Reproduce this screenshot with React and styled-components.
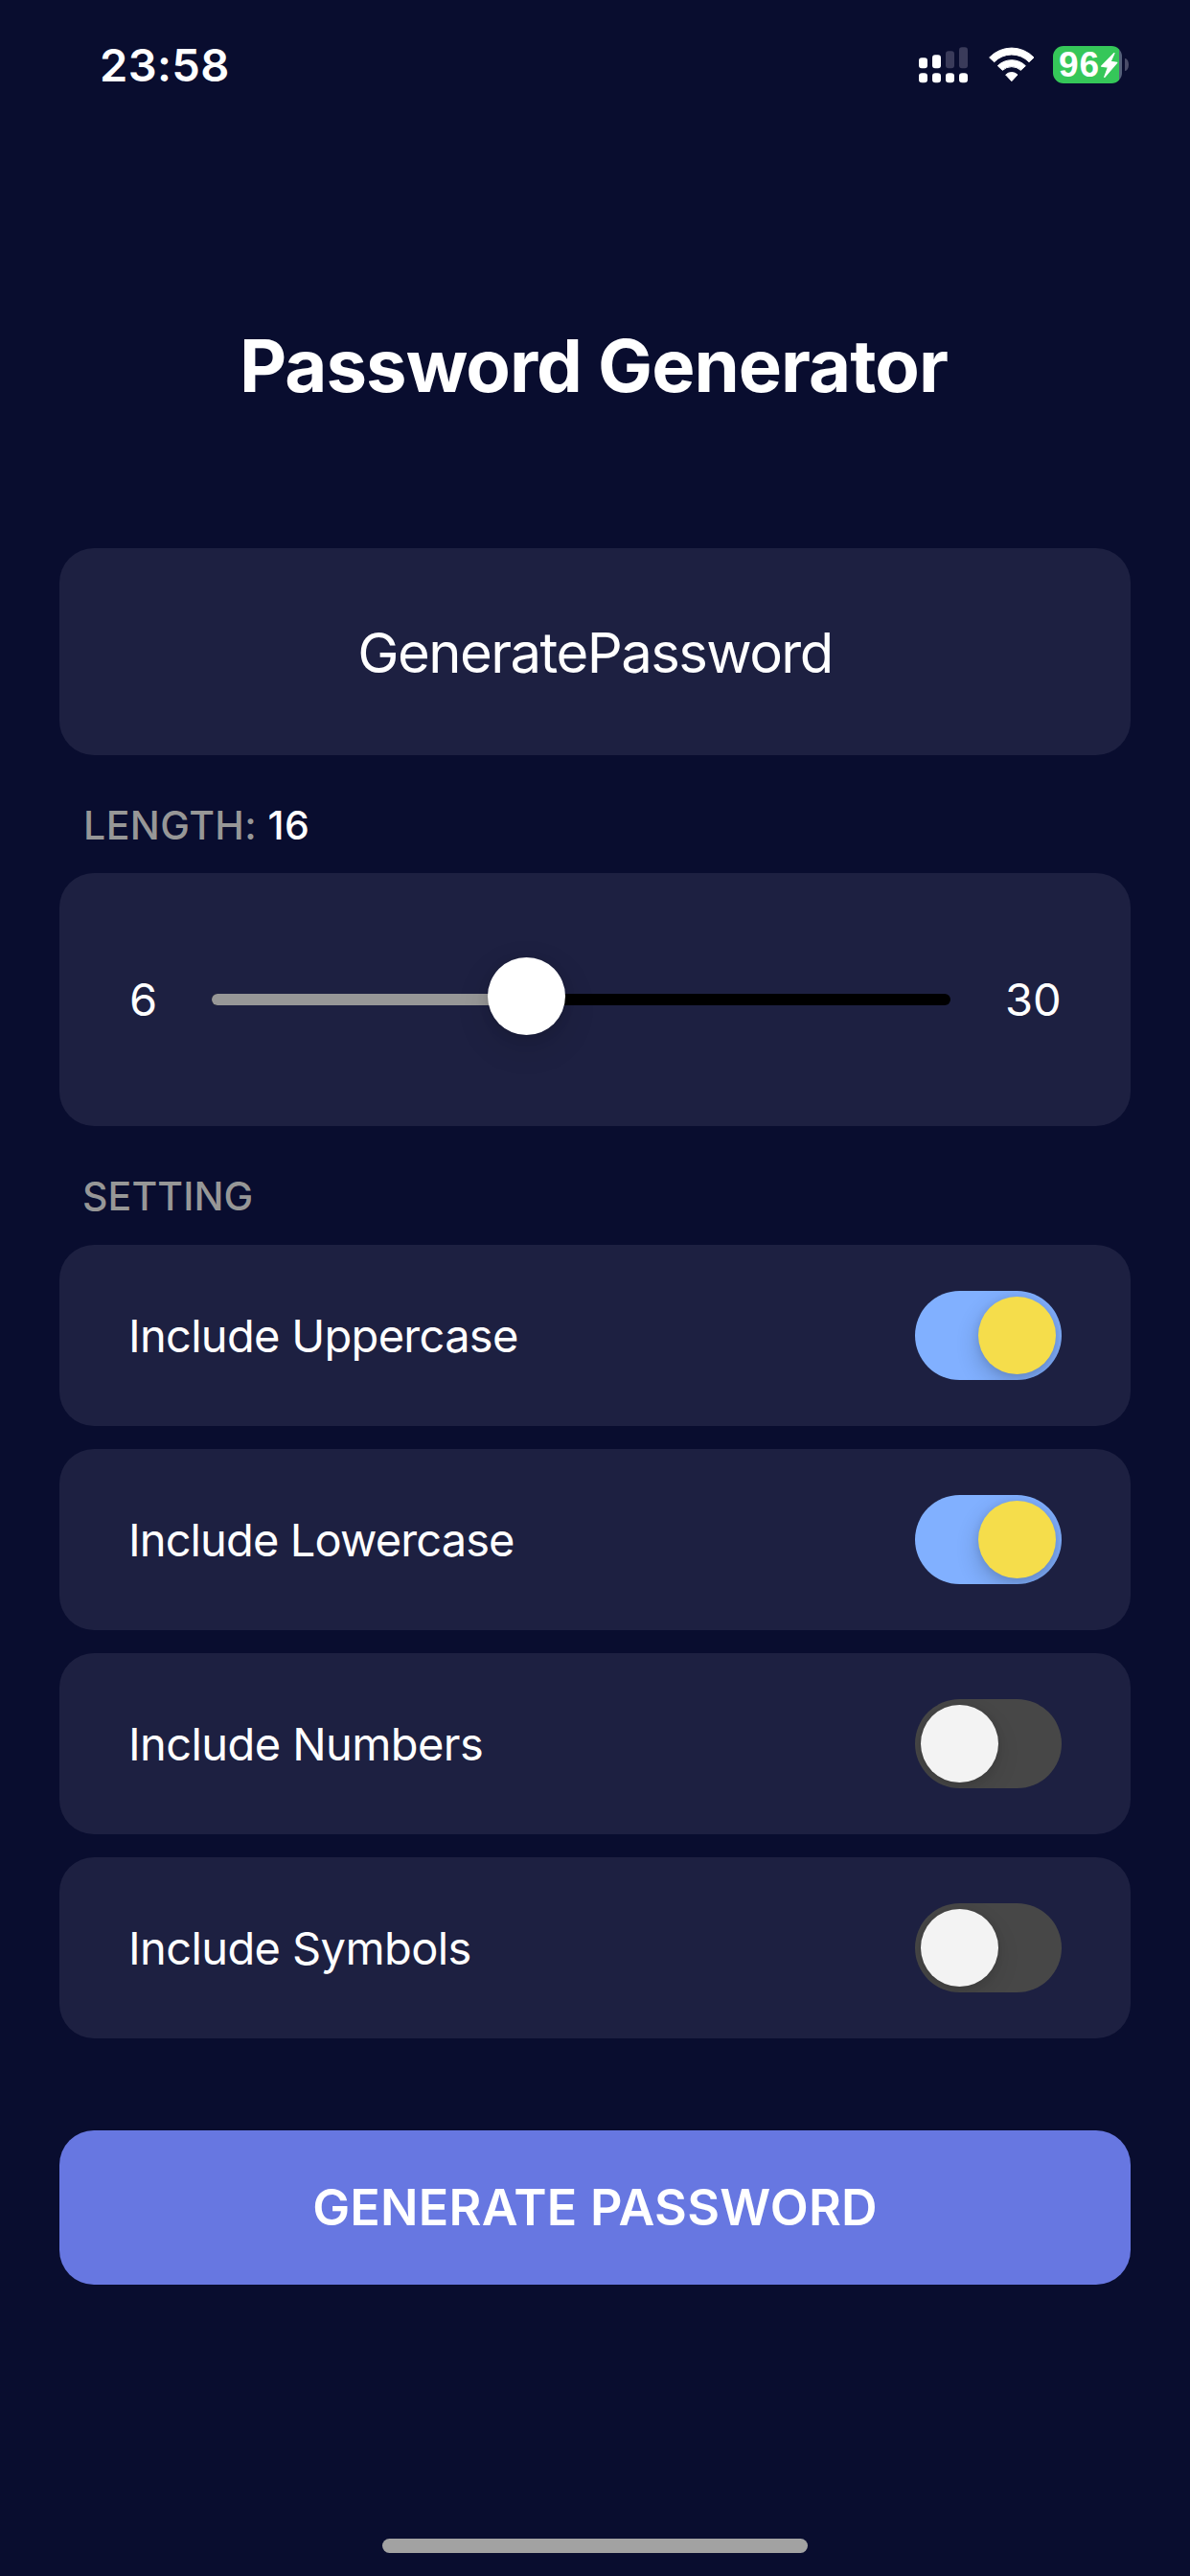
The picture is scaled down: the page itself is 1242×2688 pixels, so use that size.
import React, { useState } from "react";
import styled, { createGlobalStyle } from "styled-components";

const GlobalStyle = createGlobalStyle`
  * { box-sizing: border-box; }
  html, body { margin: 0; background: #090d2f; }
  body { font-family: Inter, "Liberation Sans", sans-serif; color: #fff; }
`;

const Screen = styled.div`
  display: flex;
  flex-direction: column;
  width: 1242px;
  height: 2688px;
  background: #090d2f;
  overflow: hidden;
`;

const StatusBar = styled.header`
  display: flex;
  justify-content: space-between;
  align-items: flex-start;
  height: 136px;
  padding: 0 64px 0 104px;
`;

const Time = styled.span`
  font-size: 47px;
  font-weight: 600;
  line-height: 136px;
  letter-spacing: 0.4px;
`;

const StatusIcons = styled.div`
  display: flex;
  align-items: flex-start;
  padding-top: 47px;
`;

const SignalIcon = styled.svg`
  width: 51px;
  height: 40px;
  margin-right: 20px;
`;

const WifiIcon = styled.svg`
  width: 52px;
  height: 40px;
  margin-right: 17px;
`;

const Battery = styled.div`
  display: flex;
  align-items: center;
  margin-top: 1px;
  height: 39px;
`;

const BatteryBody = styled.div`
  display: flex;
  align-items: center;
  width: 72px;
  height: 39px;
  padding-left: 6px;
  border-radius: 11px;
  background: linear-gradient(90deg, #35c759 69px, #55607a 69px);
`;

const BatteryLevel = styled.span`
  font-family: "Liberation Sans", Arial, sans-serif;
  font-size: 37px;
  font-weight: 700;
  line-height: 39px;
  letter-spacing: 0.8px;
`;

const Bolt = styled.svg`
  width: 19px;
  height: 28px;
  flex-shrink: 0;
`;

const BatteryTip = styled.div`
  width: 4px;
  height: 13px;
  margin-left: 3px;
  border-radius: 0 4px 4px 0 / 0 7px 7px 0;
  background: #4a4c68;
`;

const Content = styled.main`
  display: flex;
  flex-direction: column;
  padding: 0 62px;
`;

const Title = styled.h1`
  margin: 197px 0 142px;
  padding-right: 3px;
  font-size: 76px;
  font-weight: 700;
  line-height: 97px;
  letter-spacing: -0.96px;
  text-align: center;
`;

const Card = styled.section`
  background: #1d2041;
  border-radius: 36px;
`;

const PasswordCard = styled(Card)`
  display: flex;
  align-items: center;
  justify-content: center;
  height: 216px;
  padding-top: 1px;
  font-size: 58px;
  letter-spacing: -1.56px;
`;

const Label = styled.h2`
  margin: 48px 0 0;
  padding-left: ${(p) => p.$indent}px;
  height: ${(p) => p.$height}px;
  font-size: 41px;
  font-weight: 500;
  line-height: 51px;
  letter-spacing: ${(p) => p.$tracking}px;
  color: #979797;
`;

const LabelValue = styled.span`
  color: #fff;
`;

const SliderCard = styled(Card)`
  display: grid;
  grid-template-columns: 86px 771px auto;
  align-items: center;
  height: 264px;
  padding-left: 73px;
`;

const Bound = styled.span`
  padding-left: ${(p) => p.$gap}px;
  font-size: 47px;
  line-height: 60px;
`;

const Track = styled.div`
  position: relative;
  height: 12px;
  border-radius: 6px;
  background: #000;
`;

const TrackFill = styled.div`
  height: 12px;
  border-radius: 6px 0 0 6px;
  background: #979797;
`;

const Thumb = styled.div`
  position: absolute;
  top: -38px;
  width: 81px;
  height: 81px;
  border-radius: 50%;
  background: #fff;
  box-shadow: 0 12px 36px rgba(0, 0, 0, 0.12), 0 2px 12px rgba(0, 0, 0, 0.1);
`;

const SettingList = styled.div`
  display: flex;
  flex-direction: column;
  gap: 24px;
`;

const SettingRow = styled(Card)`
  display: flex;
  align-items: center;
  justify-content: space-between;
  height: 189px;
  padding: 0 72px;
`;

const SettingName = styled.span`
  padding-top: 1px;
  font-size: 47px;
  line-height: 60px;
  letter-spacing: ${(p) => p.$tracking}px;
`;

const Switch = styled.button`
  display: flex;
  justify-content: ${(p) => (p.$on ? "flex-end" : "flex-start")};
  width: 153px;
  height: 93px;
  padding: 6px;
  border: 0;
  border-radius: 47px;
  background: ${(p) => (p.$on ? "#81b0ff" : "#474747")};
  overflow: hidden;
`;

const Knob = styled.span`
  width: 81px;
  height: 81px;
  border-radius: 50%;
  background: ${(p) => (p.$on ? "#f5dd4b" : "#f3f3f3")};
  box-shadow: 0 9px 24px rgba(0, 0, 0, ${(p) => (p.$on ? 0.2 : 0.1)}),
    0 1px 8px rgba(0, 0, 0, 0.1);
`;

const GenerateButton = styled.button`
  height: 161px;
  margin-top: 96px;
  padding: 0;
  border: 0;
  border-radius: 36px;
  background: #6777e1;
  color: #fff;
  font-family: inherit;
  font-size: 52px;
  font-weight: 600;
  line-height: 162px;
  letter-spacing: 0.25px;
`;

const HomeIndicator = styled.div`
  align-self: center;
  width: 444px;
  height: 15px;
  margin: auto 0 24px;
  border-radius: 8px;
  background: #a2a2a2;
`;

const MIN = 6;
const MAX = 30;
const TRACK_WIDTH = 771;
const THUMB_WIDTH = 81;

const SETTINGS = [
  { name: "Include Uppercase", on: true, tracking: -0.7 },
  { name: "Include Lowercase", on: true, tracking: -0.88 },
  { name: "Include Numbers", on: false, tracking: -0.58 },
  { name: "Include Symbols", on: false, tracking: -0.6 },
];

function Signal() {
  return (
    <SignalIcon viewBox="87 50 153 120" fill="#fff">
      <rect x="87" y="90" width="27" height="33" rx="9" />
      <rect x="129" y="81" width="27" height="42" rx="9" />
      <rect x="171" y="69" width="27" height="54" rx="9" fill="#3a3b5a" />
      <rect x="213" y="57" width="27" height="66" rx="9" fill="#3a3b5a" />
      {[87, 129, 171, 213].map((x) => (
        <rect key={x} x={x} y="138" width="27" height="30" rx="10" />
      ))}
    </SignalIcon>
  );
}

function Wifi() {
  return (
    <WifiIcon viewBox="299 50 156 120" fill="#fff" stroke="#fff" strokeWidth="3" strokeLinejoin="round">
      <path d="M307 89 A96 96 0 0 1 446 89 L431 103 A76 76 0 0 0 322 103 Z" />
      <path d="M333 115 A62 62 0 0 1 420 115 L405 129 A42 42 0 0 0 348 129 Z" />
      <path d="M358 143 A27 27 0 0 1 395 143 L376.5 163 Z" />
    </WifiIcon>
  );
}

function Slider({ value }) {
  const ratio = (value - MIN) / (MAX - MIN);
  const left = ratio * (TRACK_WIDTH - THUMB_WIDTH);
  return (
    <Track>
      <TrackFill style={{ width: left + THUMB_WIDTH / 2 }} />
      <Thumb style={{ left }} />
    </Track>
  );
}

export default function App() {
  const [settings, setSettings] = useState(SETTINGS);
  const toggle = (name) =>
    setSettings((list) => list.map((s) => (s.name === name ? { ...s, on: !s.on } : s)));

  return (
    <Screen>
      <GlobalStyle />
      <StatusBar>
        <Time>23:58</Time>
        <StatusIcons>
          <Signal />
          <Wifi />
          <Battery>
            <BatteryBody>
              <BatteryLevel>96</BatteryLevel>
              <Bolt viewBox="-0.5 -0.5 19 28" fill="#fff" stroke="#fff" strokeWidth="1.2" strokeLinejoin="round">
                <path d="M14.5 1 L1 14.6 L8 15.6 L4.2 26 L17.3 10.8 L10.6 9.8 Z" />
              </Bolt>
            </BatteryBody>
            <BatteryTip />
          </Battery>
        </StatusIcons>
      </StatusBar>
      <Content>
        <Title>Password Generator</Title>
        <PasswordCard>GeneratePassword</PasswordCard>
        <Label $indent={25} $height={75} $tracking={0.45}>
          LENGTH: <LabelValue>16</LabelValue>
        </Label>
        <SliderCard>
          <Bound $gap={0}>{MIN}</Bound>
          <Slider value={16} />
          <Bound $gap={57}>{MAX}</Bound>
        </SliderCard>
        <Label $indent={24} $height={76} $tracking={0.1}>
          SETTING
        </Label>
        <SettingList>
          {settings.map((s) => (
            <SettingRow key={s.name}>
              <SettingName $tracking={s.tracking}>{s.name}</SettingName>
              <Switch $on={s.on} onClick={() => toggle(s.name)}>
                <Knob $on={s.on} />
              </Switch>
            </SettingRow>
          ))}
        </SettingList>
        <GenerateButton>GENERATE PASSWORD</GenerateButton>
      </Content>
      <HomeIndicator />
    </Screen>
  );
}
